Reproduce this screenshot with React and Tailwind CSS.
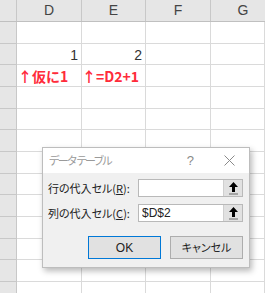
import { useState } from 'react';

// Excel sheet fragment with the "データ テーブル" dialog on top

const jp = "font-['Noto_Sans_CJK_JP','Liberation_Sans',sans-serif]";
const grid = 'border-r border-b border-[#dadada]';

const UpArrow = () => (
  <svg width="11" height="14" viewBox="0 0 11 14">
    <path d="M5.5 1 L10 6 L7 6 L7 11 L4 11 L4 6 L1 6 Z" fill="#000" />
    <rect x="1" y="12.5" width="9" height="1" fill="#6b6b6b" />
  </svg>
);

const Row = ({ d, e }) => (
  <div className="flex h-[21.67px]">
    <div className={`w-[17px] shrink-0 bg-[#e6e6e6] border-r border-b border-[#c8c8c8]`} />
    <div className={`w-[65px] shrink-0 ${grid} flex items-end overflow-visible whitespace-nowrap`}>{d}</div>
    <div className={`w-[64px] shrink-0 ${grid} flex items-end overflow-visible whitespace-nowrap`}>{e}</div>
    <div className={`w-[65px] shrink-0 ${grid}`} />
    <div className={`flex-1 ${grid}`} />
  </div>
);

const App = () => {
  const [col, setCol] = useState('$D$2');
  const [row, setRow] = useState('');

  const num = "w-full text-right pr-[3px] pb-[2px] leading-none text-[14px] text-[#333] font-['Liberation_Sans',sans-serif]";
  const red = `${jp} text-[14px] font-bold text-[#ff2b3a] leading-none pb-[3px]`;

  const rows = [
    {},
    { d: <span className={num}>1</span>, e: <span className={num}>2</span> },
    { d: <span className={`${red} pl-[1px]`}>↑仮に1</span>, e: <span className={`${red}`}>↑=D2+1</span> },
  ];
  while (rows.length < 13) rows.push({});

  return (
    <div className="relative w-[265px] h-[293px] overflow-hidden bg-white">
      {/* column header */}
      <div className="flex h-[22px] bg-[#e6e6e6] border-b border-[#c0c0c0] text-[14px] text-[#444] font-['Liberation_Sans',sans-serif]">
        <div className="w-[17px] shrink-0 border-r border-[#c8c8c8]" />
        {['D', 'E', 'F'].map((c, i) => (
          <div key={c} className={`${i === 1 ? 'w-[64px]' : 'w-[65px]'} shrink-0 border-r border-[#c8c8c8] flex items-center justify-center`}>{c}</div>
        ))}
        <div className="flex-1 flex items-center justify-center pl-[10px]">G</div>
      </div>

      {rows.map((r, i) => (
        <Row key={i} d={r.d} e={r.e} />
      ))}

      {/* dialog */}
      <div className={`absolute left-[42px] top-[147px] w-[208px] h-[121px] border border-[#bdbdbd] bg-[#f0f0f0] shadow-[2px_3px_6px_rgba(0,0,0,0.28)] flex flex-col ${jp} [font-feature-settings:'palt']`}>
        <div className="h-[25px] bg-white flex items-center pl-[6px] pr-[14px] text-[11px] text-[#9a9a9a]">
          <span className="flex-1 tracking-[-1.4px]">データ テーブル</span>
          <span className="font-['Liberation_Sans',sans-serif] text-[13px] text-[#8a8a8a] mr-[30px]">?</span>
          <svg width="11" height="11" viewBox="0 0 11 11">
            <path d="M0.5 0.5 L10.5 10.5 M10.5 0.5 L0.5 10.5" stroke="#8a8a8a" strokeWidth="1" />
          </svg>
        </div>

        <div className="flex flex-col gap-[7px] pt-[6px] pl-[5px] pr-[6px] text-[11px] text-[#222]">
          <div className="flex items-center h-[18px]">
            <span className="w-[90px] shrink-0 whitespace-nowrap">行の代入セル(<u>R</u>):</span>
            <div className="flex-1 min-w-0 h-[18px] flex bg-white border border-[#b9b9b9]">
              <input
                value={row}
                onChange={(ev) => setRow(ev.target.value)}
                className="flex-1 w-0 min-w-0 px-[3px] text-[12px] outline-none bg-transparent"
              />
              <div className="w-[19px] shrink-0 h-full bg-[#e1e1e1] border-l border-[#cfcfcf] flex items-center justify-center">
                <UpArrow />
              </div>
            </div>
          </div>
          <div className="flex items-center h-[18px]">
            <span className="w-[90px] shrink-0 whitespace-nowrap">列の代入セル(<u>C</u>):</span>
            <div className="flex-1 min-w-0 h-[18px] flex bg-white border border-[#b9b9b9]">
              <input
                value={col}
                onChange={(ev) => setCol(ev.target.value)}
                className="flex-1 w-0 min-w-0 px-[3px] text-[12px] text-[#222] outline-none bg-transparent font-['Liberation_Sans',sans-serif]"
              />
              <div className="w-[19px] shrink-0 h-full bg-[#e1e1e1] border-l border-[#cfcfcf] flex items-center justify-center">
                <UpArrow />
              </div>
            </div>
          </div>
        </div>

        <div className="flex justify-end gap-[9px] pr-[6px] mt-[14px]">
          <button className="w-[73px] h-[23px] bg-[#e1e1e1] border border-[#0078d7] text-[12px] text-[#222] font-['Liberation_Sans',sans-serif]">OK</button>
          <button className="w-[73px] h-[23px] bg-[#e1e1e1] border border-[#adadad] text-[11px] text-[#222]">キャンセル</button>
        </div>
      </div>
    </div>
  );
};

export default App;
